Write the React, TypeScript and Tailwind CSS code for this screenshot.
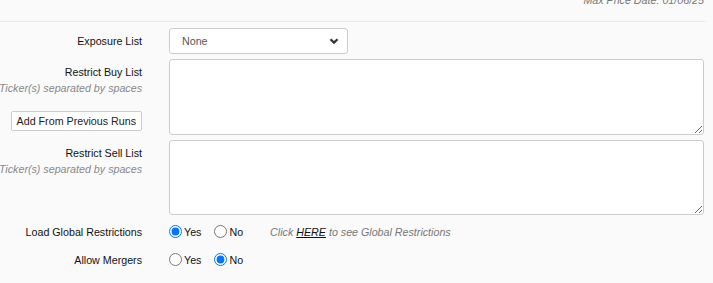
import React from "react";

const Label: React.FC<{ title: string; hint?: string; children?: React.ReactNode }> = ({ title, hint, children }) => (
    <div className="flex flex-col items-end whitespace-nowrap text-right">
        <div className="leading-[13px] text-[#111]">{title}</div>
        {hint && <div className="mt-[3px] leading-[13px] italic text-[#888]">{hint}</div>}
        {children}
    </div>
);

const Radio: React.FC<{ name: string; label: string; checked?: boolean }> = ({ name, label, checked }) => (
    <label className="flex items-center gap-[2px] text-[#111]">
        <input
            type="radio"
            name={name}
            defaultChecked={checked}
            className="m-0 h-[13px] w-[13px] accent-[#0075ff]"
        />
        <span>{label}</span>
    </label>
);

export default function App() {
    return (
        <div className="h-[283px] w-[713px] overflow-hidden bg-[#fafafa] font-['Liberation_Sans',Arial,sans-serif] text-[10.7px] text-[#222]">
            {/* header */}
            <div className="-mt-[6px] pr-[9px] text-right italic leading-[13px] text-[#777]">
                Max Price Date: 01/06/25
            </div>
            <div className="mt-[14px] mr-[8px] h-px bg-[#e8e8e8]" />

            <div className="grid grid-cols-[142px_1fr] gap-x-[27px] pr-[9px]">
                {/* Exposure List */}
                <div className="mt-[6px] flex h-[26px] items-center justify-end text-[#111]">Exposure List</div>
                <div className="mt-[6px]">
                    <div className="flex h-[26px] w-[179px] items-center justify-between rounded-[3px] border border-[#ccc] bg-white pl-[12px] pr-[8px] text-[#555]">
                        <span>None</span>
                        <svg width="10" height="8" viewBox="0 0 10 8">
                            <path d="M1.5 2.2 L5 5.6 L8.5 2.2" fill="none" stroke="#333" strokeWidth="2.2" />
                        </svg>
                    </div>
                </div>

                {/* Restrict Buy List */}
                <div className="mt-[5px] pt-[7px]">
                    <Label title="Restrict Buy List" hint="Ticker(s) separated by spaces">
                        <button className="mt-[16px] h-[20px] rounded-[2px] border border-[#ccc] bg-white px-[5px] text-[10.7px] leading-none text-[#222]">
                            Add From Previous Runs
                        </button>
                    </Label>
                </div>
                <div className="mt-[5px]">
                    <textarea className="block h-[76px] w-full resize-y rounded-[3px] border border-[#ccc] bg-white" />
                </div>

                {/* Restrict Sell List */}
                <div className="mt-[5px] pt-[7px]">
                    <Label title="Restrict Sell List" hint="Ticker(s) separated by spaces" />
                </div>
                <div className="mt-[5px]">
                    <textarea className="block h-[75px] w-full resize-y rounded-[3px] border border-[#ccc] bg-white" />
                </div>

                {/* Load Global Restrictions */}
                <div className="mt-[7px] flex h-[20px] items-center justify-end text-[#111]">Load Global Restrictions</div>
                <div className="mt-[7px] flex h-[20px] items-center">
                    <Radio name="global" label="Yes" checked />
                    <div className="ml-[13px]">
                        <Radio name="global" label="No" />
                    </div>
                    <span className="ml-[27px] italic text-[#777]">
                        Click <span className="text-[#111] underline">HERE</span> to see Global Restrictions
                    </span>
                </div>

                {/* Allow Mergers */}
                <div className="mt-[8px] flex h-[20px] items-center justify-end text-[#111]">Allow Mergers</div>
                <div className="mt-[8px] flex h-[20px] items-center">
                    <Radio name="mergers" label="Yes" />
                    <div className="ml-[13px]">
                        <Radio name="mergers" label="No" checked />
                    </div>
                </div>
            </div>
        </div>
    );
}
